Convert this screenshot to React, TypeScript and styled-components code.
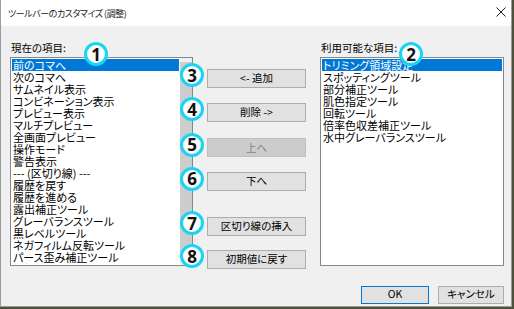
import React from 'react'
import styled, { createGlobalStyle } from 'styled-components'

const GlobalStyle = createGlobalStyle`
  html, body {
    margin: 0;
    padding: 0;
  }
  body {
    background: #4d5139;
    font-family: 'Noto Sans CJK JP', 'Noto Sans', sans-serif;
    font-feature-settings: 'palt';
    color: #000000;
  }
`

const currentItems = [
  '前のコマへ',
  '次のコマへ',
  'サムネイル表示',
  'コンビネーション表示',
  'プレビュー表示',
  'マルチプレビュー',
  '全画面プレビュー',
  '操作モード',
  '警告表示',
  '--- (区切り線) ---',
  '履歴を戻す',
  '履歴を進める',
  '露出補正ツール',
  'グレーバランスツール',
  '黒レベルツール',
  'ネガフィルム反転ツール',
  'パース歪み補正ツール',
  '選択範囲ツール',
]

const availableItems = [
  'トリミング領域設定',
  'スポッティングツール',
  '部分補正ツール',
  '肌色指定ツール',
  '回転ツール',
  '倍率色収差補正ツール',
  '水中グレーバランスツール',
]

const actions = [
  { num: 3, label: '<- 追加', mt: 0, disabled: false },
  { num: 4, label: '削除 ->', mt: 9, disabled: false },
  { num: 5, label: '上へ', mt: 11, disabled: true },
  { num: 6, label: '下へ', mt: 9, disabled: false },
  { num: 7, label: '区切り線の挿入', mt: 20, disabled: false },
  { num: 8, label: '初期値に戻す', mt: 8, disabled: false },
]

const Dialog = styled.div`
  width: 512px;
  height: 307px;
  box-sizing: border-box;
  border: 1px solid #9c9c9c;
  border-top: none;
  display: flex;
  flex-direction: column;
  background: #f0f0f0;
`

const TitleBar = styled.div`
  height: 25px;
  flex: none;
  background: #ffffff;
  display: flex;
  align-items: center;
  justify-content: space-between;
  padding: 1px 5px 0 7px;
  font-size: 9px;
  letter-spacing: -0.45px;
  color: #1a1a1a;
`

const CloseIcon = styled.svg`
  width: 10px;
  height: 10px;
  margin-bottom: 3px;
`

const Body = styled.div`
  flex: 1;
  display: flex;
  flex-direction: column;
  padding: 15px 7px 7px 9px;
`

const Columns = styled.div`
  display: flex;
  gap: 14px;
`

const ListColumn = styled.div<{ $width: number }>`
  position: relative;
  width: ${(p) => p.$width}px;
  display: flex;
  flex-direction: column;
`

const Label = styled.div`
  height: 14px;
  line-height: 14px;
  font-size: 10.5px;
  margin-bottom: 2px;
  padding-left: 1px;
`

const ListBox = styled.div`
  height: 209px;
  box-sizing: border-box;
  border: 1px solid #828790;
  background: #ffffff;
  display: flex;
  padding: 1px 0 1px 1px;
  overflow: hidden;
`

const Items = styled.div`
  flex: 1;
  display: flex;
  flex-direction: column;
  overflow: hidden;
  padding-right: 1px;
`

const Item = styled.div<{ $selected?: boolean }>`
  flex: none;
  height: 12px;
  line-height: 12px;
  font-size: 11px;
  padding-left: 1px;
  white-space: nowrap;
  background: ${(p) => (p.$selected ? '#0078d7' : 'transparent')};
  color: ${(p) => (p.$selected ? '#ffffff' : '#000000')};
`

const ScrollBar = styled.div`
  width: 12px;
  flex: none;
  margin-top: -1px;
  margin-bottom: -1px;
  background: #f0f0f0;
  display: flex;
  flex-direction: column;
`

const Thumb = styled.div`
  flex: 1;
  margin: 4px 0 0;
  background: #cdcdcd;
`

const ArrowDown = styled.div`
  height: 13px;
  display: flex;
  align-items: center;
  justify-content: center;
`

const Middle = styled.div`
  width: 99px;
  padding-top: 22px;
  display: flex;
  flex-direction: column;
`

const ActionRow = styled.div<{ $mt: number }>`
  position: relative;
  margin-top: ${(p) => p.$mt}px;
`

const Button = styled.button<{ $width?: number; $default?: boolean }>`
  width: ${(p) => (p.$width ? `${p.$width}px` : '100%')};
  height: 19px;
  box-sizing: border-box;
  padding: 0;
  margin: 0;
  font-family: inherit;
  font-feature-settings: 'palt';
  font-size: 10.5px;
  line-height: 1;
  color: #000000;
  background: #e1e1e1;
  border: 1px solid ${(p) => (p.$default ? '#0078d7' : '#adadad')};
  border-radius: 0;
  &:disabled {
    background: #cccccc;
    border-color: #bfbfbf;
    color: #838383;
  }
`

const Badge = styled.div`
  position: absolute;
  width: 24px;
  height: 24px;
  box-sizing: border-box;
  border: 3px solid #19d5f3;
  border-radius: 50%;
  background: #ffffff;
  display: flex;
  align-items: center;
  justify-content: center;
  font-family: 'Noto Sans', 'DejaVu Sans', sans-serif;
  font-weight: 700;
  font-size: 17px;
  line-height: 1;
  color: #111111;
`

const ListBadge = styled(Badge)<{ $left: number }>`
  left: ${(p) => p.$left}px;
  top: 1px;
`

const ActionBadge = styled(Badge)`
  left: -27px;
  top: 50%;
  transform: translateY(-50%);
`

const Footer = styled.div`
  margin-top: 17px;
  display: flex;
  justify-content: flex-end;
  gap: 9px;
`

const FooterButton = styled(Button)`
  height: 18px;
`

const App = () => {
  return (
    <>
      <GlobalStyle />
      <Dialog>
        <TitleBar>
          <span>ツールバーのカスタマイズ (調整)</span>
          <CloseIcon viewBox="0 0 10 10">
            <path d="M0.5 0.5 L9.5 9.5 M9.5 0.5 L0.5 9.5" stroke="#1a1a1a" strokeWidth="1" />
          </CloseIcon>
        </TitleBar>
        <Body>
          <Columns>
            <ListColumn $width={183}>
              <Label>現在の項目:</Label>
              <ListBox>
                <Items>
                  {currentItems.map((it, i) => (
                    <Item key={it} $selected={i === 0}>
                      {it}
                    </Item>
                  ))}
                </Items>
                <ScrollBar>
                  <Thumb />
                  <ArrowDown>
                    <svg width="7" height="5" viewBox="0 0 7 5">
                      <path d="M0.5 1 L3.5 4 L6.5 1" fill="none" stroke="#606060" strokeWidth="1" />
                    </svg>
                  </ArrowDown>
                </ScrollBar>
              </ListBox>
              <ListBadge $left={74}>1</ListBadge>
            </ListColumn>
            <Middle>
              {actions.map((a) => (
                <ActionRow key={a.num} $mt={a.mt}>
                  <Button disabled={a.disabled}>{a.label}</Button>
                  <ActionBadge>{a.num}</ActionBadge>
                </ActionRow>
              ))}
            </Middle>
            <ListColumn $width={184}>
              <Label>利用可能な項目:</Label>
              <ListBox>
                <Items>
                  {availableItems.map((it, i) => (
                    <Item key={it} $selected={i === 0}>
                      {it}
                    </Item>
                  ))}
                </Items>
              </ListBox>
              <ListBadge $left={79}>2</ListBadge>
            </ListColumn>
          </Columns>
          <Footer>
            <FooterButton $width={68} $default>
              OK
            </FooterButton>
            <FooterButton $width={66}>キャンセル</FooterButton>
          </Footer>
        </Body>
      </Dialog>
    </>
  )
}

export default App
